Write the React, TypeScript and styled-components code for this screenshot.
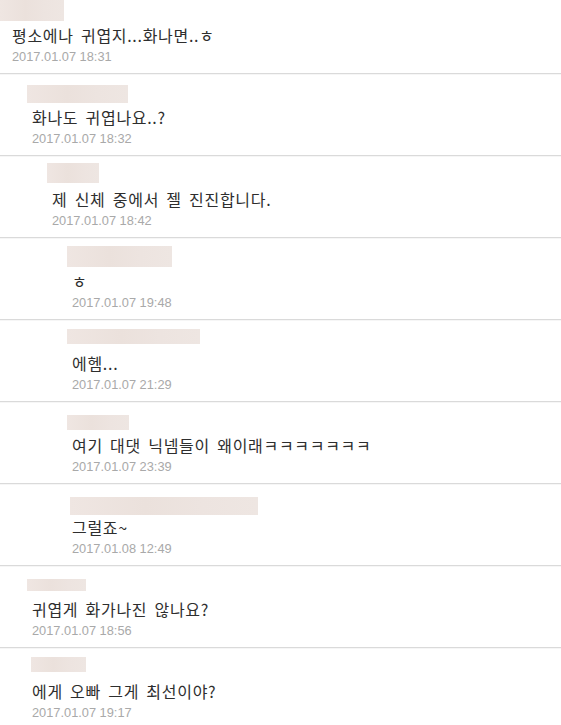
import React from "react";
import styled, { createGlobalStyle } from "styled-components";

const Global = createGlobalStyle`
  html, body { margin: 0; padding: 0; background: #fff; }
  body { overflow: hidden; }
`;

const List = styled.ul`
  list-style: none;
  margin: -8px 0 0;
  padding: 0;
  width: 561px;
`;

const Item = styled.li<{ $level: number }>`
  padding: 12px 0 8px ${(p) => 12 + p.$level * 20}px;
  border-bottom: 1px solid #dadada;
  box-shadow: 0 1px 0 #f6f6f6;
  display: flex;
  flex-direction: column;
  align-items: flex-start;
`;

const NameSlot = styled.div`
  height: 18px;
  margin-bottom: 3px;
  display: flex;
  align-items: flex-start;
`;

const Blur = styled.span<{ $w: number; $h: number; $dx: number; $dy: number }>`
  display: block;
  width: ${(p) => p.$w}px;
  height: ${(p) => p.$h}px;
  margin-left: ${(p) => p.$dx}px;
  margin-top: ${(p) => p.$dy}px;
  background: linear-gradient(90deg, #efe6e2 0%, #ebe1dc 40%, #ede4e0 70%, #eee6e2 100%);
`;

const Body = styled.p`
  margin: 0;
  font-family: "Noto Sans CJK KR", "Noto Sans", sans-serif;
  font-size: 16px;
  line-height: 20px;
  color: #2e2e2e;
  word-spacing: 3px;
  letter-spacing: 0.7px;
`;

const DateText = styled.time`
  margin-top: 4px;
  font-family: "Liberation Sans", Arial, sans-serif;
  font-size: 12.8px;
  line-height: 16px;
  color: #a9a9a9;
`;

type C = { level: number; w: number; h: number; dx: number; dy: number; text: string; date: string };

const comments: C[] = [
  { level: 0, w: 64, h: 22, dx: -12, dy: -5, text: "평소에나 귀엽지...화나면..ㅎ", date: "2017.01.07 18:31" },
  { level: 1, w: 101, h: 18, dx: -5, dy: -1, text: "화나도 귀엽나요..?", date: "2017.01.07 18:32" },
  { level: 2, w: 52, h: 20, dx: -5, dy: -5, text: "제 신체 중에서 젤 진진합니다.", date: "2017.01.07 18:42" },
  { level: 3, w: 105, h: 21, dx: -5, dy: -4, text: "ㅎ", date: "2017.01.07 19:48" },
  { level: 3, w: 133, h: 15, dx: -5, dy: -3, text: "에헴...", date: "2017.01.07 21:29" },
  { level: 3, w: 62, h: 15, dx: -5, dy: 1, text: "여기 대댓 닉넴들이 왜이래ㅋㅋㅋㅋㅋㅋㅋ", date: "2017.01.07 23:39" },
  { level: 3, w: 188, h: 18, dx: -2, dy: 1, text: "그럴죠~", date: "2017.01.08 12:49" },
  { level: 1, w: 59, h: 12, dx: -5, dy: 1, text: "귀엽게 화가나진 않나요?", date: "2017.01.07 18:56" },
  { level: 1, w: 55, h: 15, dx: -1, dy: -3, text: "에게 오빠 그게 최선이야?", date: "2017.01.07 19:17" },
];

export default function App() {
  return (
    <>
      <Global />
      <List>
        {comments.map((c, i) => (
          <Item key={i} $level={c.level}>
            <NameSlot>
              <Blur $w={c.w} $h={c.h} $dx={c.dx} $dy={c.dy} />
            </NameSlot>
            <Body>{c.text}</Body>
            <DateText>{c.date}</DateText>
          </Item>
        ))}
      </List>
    </>
  );
}
